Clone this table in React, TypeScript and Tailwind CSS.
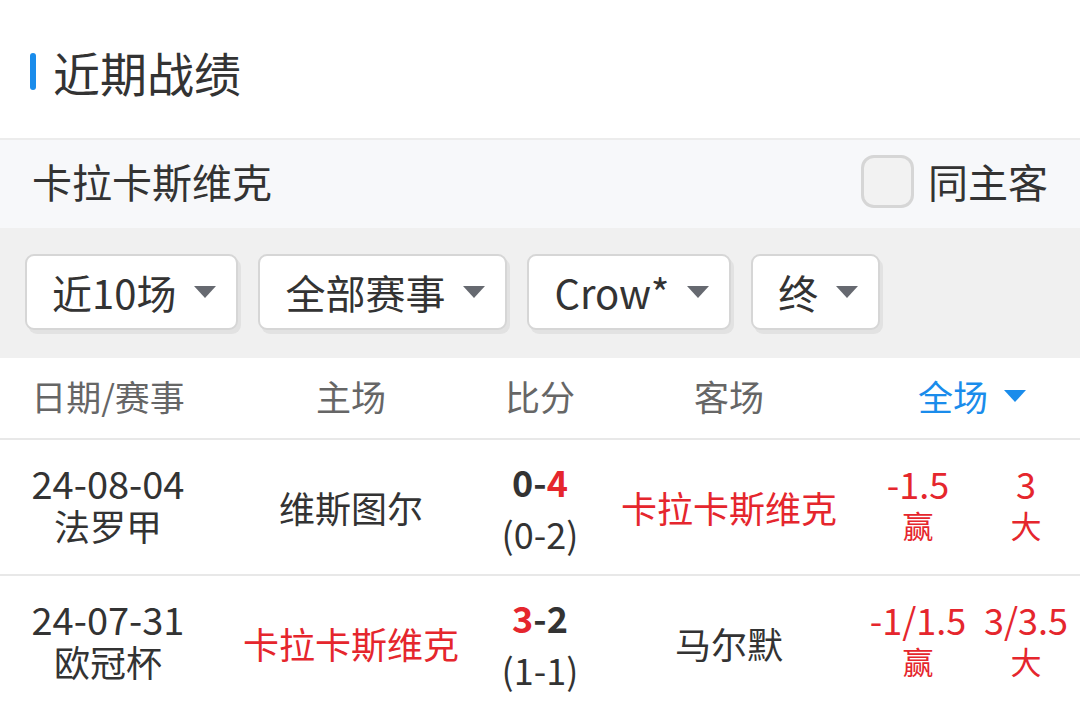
import React from 'react'

////////////////////////////////////////////////////////////////////////////////
// Data

interface Match {
  date: string
  league: string
  home: string
  away: string
  homeScore: number
  awayScore: number
  half: string
  handicap: string
  handicapResult: string
  total: string
  totalResult: string
}

const TEAM = '卡拉卡斯维克'

const MATCHES: Match[] = [
  {
    date: '24-08-04',
    league: '法罗甲',
    home: '维斯图尔',
    away: '卡拉卡斯维克',
    homeScore: 0,
    awayScore: 4,
    half: '(0-2)',
    handicap: '-1.5',
    handicapResult: '赢',
    total: '3',
    totalResult: '大'
  },
  {
    date: '24-07-31',
    league: '欧冠杯',
    home: '卡拉卡斯维克',
    away: '马尔默',
    homeScore: 3,
    awayScore: 2,
    half: '(1-1)',
    handicap: '-1/1.5',
    handicapResult: '赢',
    total: '3/3.5',
    totalResult: '大'
  }
]

const FILTERS = ['近10场', '全部赛事', 'Crow*', '终']

const COLS = 'grid grid-cols-[216px_270px_108px_270px_108px_108px]'

////////////////////////////////////////////////////////////////////////////////
// Components

const Caret = ({ className }: { className: string }) => (
  <svg viewBox="0 0 22 12" className={className}>
    <path d="M0 0 H22 L11 12 Z" fill="currentColor" />
  </svg>
)

const FilterButton = ({ label }: { label: string }) => (
  <div className="flex h-[76px] items-center gap-[18px] rounded-[9px] border-2 border-[#d6d6d6] bg-white pl-[25px] pr-[20px] shadow-[3px_4px_0_#e2e2e2]">
    <span className="text-[40px] leading-none text-[#333]">{label}</span>
    <Caret className="h-[12px] w-[22px] text-[#666970]" />
  </div>
)

const MatchRow = ({ m }: { m: Match }) => {
  const isTeam = (name: string) => name === TEAM
  return (
    <div
      className={`${COLS} h-[136px] items-center border-b-2 border-[#e8e8e8] text-center text-[36px] text-[#333]`}
    >
      <div className="flex -translate-y-[3px] flex-col leading-[42px]">
        <span className="text-[38px]">{m.date}</span>
        <span>{m.league}</span>
      </div>
      <div className={isTeam(m.home) ? 'text-[#e5262d]' : ''}>{m.home}</div>
      <div className="flex flex-col leading-[52px]">
        <span className="font-bold">
          <span className={m.homeScore > m.awayScore ? 'text-[#e5262d]' : ''}>
            {m.homeScore}
          </span>
          -
          <span className={m.awayScore > m.homeScore ? 'text-[#e5262d]' : ''}>
            {m.awayScore}
          </span>
        </span>
        <span>{m.half}</span>
      </div>
      <div className={isTeam(m.away) ? 'text-[#e5262d]' : ''}>{m.away}</div>
      <div className="flex -translate-y-[3px] flex-col leading-[42px] text-[#e5262d]">
        <span>{m.handicap}</span>
        <span className="text-[31px]">{m.handicapResult}</span>
      </div>
      <div className="flex -translate-y-[3px] flex-col leading-[42px] text-[#e5262d]">
        <span>{m.total}</span>
        <span className="text-[31px]">{m.totalResult}</span>
      </div>
    </div>
  )
}

export default function App() {
  // Render ///////////////////////////////////////////////////////////////////////

  return (
    <div className="h-[705px] w-[1080px] overflow-hidden bg-white font-['Noto_Sans_CJK_SC','Noto_Sans',sans-serif]">
      <div className="flex h-[138px] items-center gap-[17px] pt-[5px] pl-[30px]">
        <div className="h-[37px] w-[6px] rounded-full bg-[#1a8ceb]" />
        <h1 className="text-[47px] leading-none text-[#333]">近期战绩</h1>
      </div>

      <div className="flex h-[90px] items-center justify-between border-t-2 border-[#ececec] bg-[#f7f8fa] pb-[6px] pl-[32px] pr-[32px]">
        <span className="text-[40px] text-[#333]">{TEAM}</span>
        <label className="flex items-center gap-[14px]">
          <span className="h-[53px] w-[53px] rounded-[13px] border-[3px] border-[#d6d6d6] bg-[#f2f2f2]" />
          <span className="text-[40px] text-[#333]">同主客</span>
        </label>
      </div>

      <div className="flex h-[130px] items-center gap-[20px] bg-[#f0f0f0] pb-[2px] pl-[25px]">
        {FILTERS.map(f => (
          <FilterButton key={f} label={f} />
        ))}
      </div>

      <div
        className={`${COLS} h-[82px] items-center border-b-2 border-[#e8e8e8] pb-[4px] text-center text-[35px] text-[#666]`}
      >
        <div>日期/赛事</div>
        <div>主场</div>
        <div>比分</div>
        <div>客场</div>
        <div className="col-span-2 flex items-center justify-center gap-[16px] text-[#1a8ceb]">
          <span>全场</span>
          <Caret className="h-[12px] w-[22px]" />
        </div>
      </div>

      {MATCHES.map(m => (
        <MatchRow key={m.date} m={m} />
      ))}
    </div>
  )
}
